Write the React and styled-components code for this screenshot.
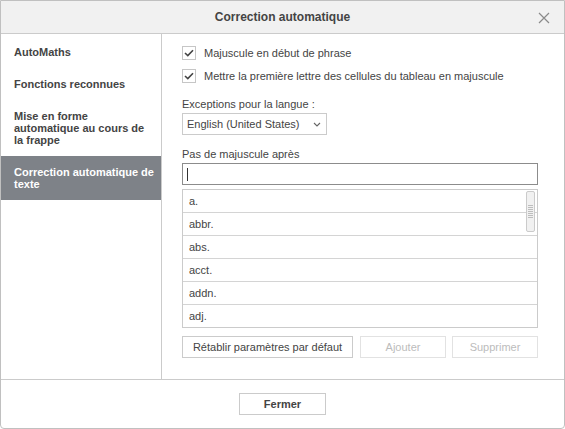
import React, { useState } from 'react'
import styled, { createGlobalStyle } from 'styled-components'

const GlobalStyle = createGlobalStyle`
  html, body {
    margin: 0;
    padding: 0;
    background: #fff;
  }
  body {
    font-family: Arial, "Liberation Sans", Helvetica, sans-serif;
    font-size: 11px;
    color: #444;
  }
  * { box-sizing: border-box; }
`

const Dialog = styled.div`
  width: 565px;
  height: 429px;
  border: 1px solid #c0c0c0;
  border-radius: 0 0 4px 4px;
  display: flex;
  flex-direction: column;
  background: #fff;
  overflow: hidden;
`

const Header = styled.div`
  height: 33px;
  flex: none;
  background: #f1f1f1;
  border-bottom: 1px solid #cbcbcb;
  display: flex;
  align-items: center;
  justify-content: center;
  position: relative;
`

const Title = styled.h1`
  margin: 0;
  font-size: 12px;
  font-weight: bold;
  color: #444;
`

const CloseButton = styled.button`
  position: absolute;
  right: 13px;
  top: 10px;
  width: 14px;
  height: 14px;
  padding: 0;
  border: 0;
  background: transparent;
  cursor: pointer;
  display: flex;
  align-items: center;
  justify-content: center;
`

const Body = styled.div`
  flex: 1;
  display: flex;
  min-height: 0;
`

const Sidebar = styled.nav`
  width: 161px;
  flex: none;
  border-right: 1px solid #cbcbcb;
  padding-top: 2px;
  display: flex;
  flex-direction: column;
`

const NavItem = styled.div`
  padding: 10px 6px 10px 13px;
  font-weight: bold;
  line-height: 12px;
  color: ${p => (p.$active ? '#fff' : '#444')};
  background: ${p => (p.$active ? '#7e8288' : 'transparent')};
  cursor: pointer;
`

const Content = styled.div`
  flex: 1;
  padding: 12px 26px 0 20px;
  display: flex;
  flex-direction: column;
`

const CheckRow = styled.label`
  display: flex;
  align-items: center;
  gap: 8px;
  height: 14px;
  line-height: 14px;
  margin-bottom: ${p => p.$mb || 0}px;
  cursor: pointer;
`

const Box = styled.span`
  width: 14px;
  height: 14px;
  border: 1px solid #c6c6c6;
  background: #fff;
  display: flex;
  align-items: center;
  justify-content: center;
  flex: none;
`

const Label = styled.div`
  line-height: 14px;
  margin-top: ${p => p.$mt}px;
  margin-bottom: 2px;
`

const Select = styled.div`
  width: 145px;
  height: 22px;
  border: 1px solid #cbcbcb;
  display: flex;
  align-items: center;
  justify-content: space-between;
  padding: 0 5px 0 4px;
  font-size: 11px;
`

const Input = styled.div`
  height: 22px;
  border: 1px solid #8c8c8c;
  display: flex;
  align-items: center;
  padding-left: 4px;
`

const Caret = styled.span`
  width: 1px;
  height: 13px;
  background: #333;
`

const List = styled.div`
  margin-top: 4px;
  height: 139px;
  border: 1px solid #cbcbcb;
  position: relative;
  overflow: hidden;
`

const Row = styled.div`
  height: 23px;
  line-height: 22px;
  padding-left: 6px;
  border-bottom: 1px solid #d4d4d4;
  &:last-of-type { border-bottom: 0; }
`

const Thumb = styled.div`
  position: absolute;
  right: 2px;
  top: 1px;
  width: 9px;
  height: 41px;
  border: 1px solid #cbcbcb;
  border-radius: 2px;
  background: #f1f1f1;
  display: flex;
  flex-direction: column;
  align-items: center;
  justify-content: center;
  gap: 1px;
`

const Grip = styled.span`
  width: 5px;
  height: 1px;
  background: #bdbdbd;
`

const Buttons = styled.div`
  margin-top: 8px;
  display: flex;
  gap: 6px;
`

const Button = styled.button`
  height: 22px;
  width: ${p => p.$w}px;
  margin-right: ${p => p.$mr || 0}px;
  border: 1px solid ${p => (p.disabled ? '#e2e2e2' : '#cbcbcb')};
  background: #fff;
  color: ${p => (p.disabled ? '#bcbcbc' : '#444')};
  font-family: inherit;
  font-size: 11px;
  font-weight: ${p => (p.$bold ? 'bold' : 'normal')};
  padding: 0;
  cursor: ${p => (p.disabled ? 'default' : 'pointer')};
`

const Footer = styled.div`
  height: 49px;
  flex: none;
  border-top: 1px solid #cbcbcb;
  display: flex;
  align-items: center;
  justify-content: center;
`

const navItems = [
  'AutoMaths',
  'Fonctions reconnues',
  'Mise en forme automatique au cours de la frappe',
  'Correction automatique de texte',
]

const exceptions = ['a.', 'abbr.', 'abs.', 'acct.', 'addn.', 'adj.']

function Check() {
  return (
    <Box>
      <svg width="10" height="8" viewBox="0 0 10 8">
        <path d="M1 4 L3.8 6.6 L9 1.2" fill="none" stroke="#444" strokeWidth="1.6" />
      </svg>
    </Box>
  )
}

export default function App() {
  const [active, setActive] = useState(3)
  return (
    <>
      <GlobalStyle />
      <Dialog>
        <Header>
          <Title>Correction automatique</Title>
          <CloseButton aria-label="Fermer">
            <svg width="12" height="12" viewBox="0 0 12 12">
              <path d="M1 1 L11 11 M11 1 L1 11" stroke="#8a8a8a" strokeWidth="1.2" />
            </svg>
          </CloseButton>
        </Header>
        <Body>
          <Sidebar>
            {navItems.map((t, i) => (
              <NavItem key={t} $active={i === active} onClick={() => setActive(i)}>
                {t}
              </NavItem>
            ))}
          </Sidebar>
          <Content>
            <CheckRow $mb={9}>
              <Check />
              Majuscule en début de phrase
            </CheckRow>
            <CheckRow>
              <Check />
              Mettre la première lettre des cellules du tableau en majuscule
            </CheckRow>
            <Label $mt={14}>Exceptions pour la langue :</Label>
            <Select>
              English (United States)
              <svg width="8" height="5" viewBox="0 0 8 5">
                <path d="M1 1 L4 4 L7 1" fill="none" stroke="#666" strokeWidth="1.1" />
              </svg>
            </Select>
            <Label $mt={12}>Pas de majuscule après</Label>
            <Input>
              <Caret />
            </Input>
            <List>
              {exceptions.map(e => (
                <Row key={e}>{e}</Row>
              ))}
              <Thumb>
                {[0, 1, 2, 3, 4, 5, 6].map(i => (
                  <Grip key={i} />
                ))}
              </Thumb>
            </List>
            <Buttons>
              <Button $w={171} $mr={1}>Rétablir paramètres par défaut</Button>
              <Button $w={86} disabled>Ajouter</Button>
              <Button $w={86} disabled>Supprimer</Button>
            </Buttons>
          </Content>
        </Body>
        <Footer>
          <Button $w={87} $bold>Fermer</Button>
        </Footer>
      </Dialog>
    </>
  )
}
